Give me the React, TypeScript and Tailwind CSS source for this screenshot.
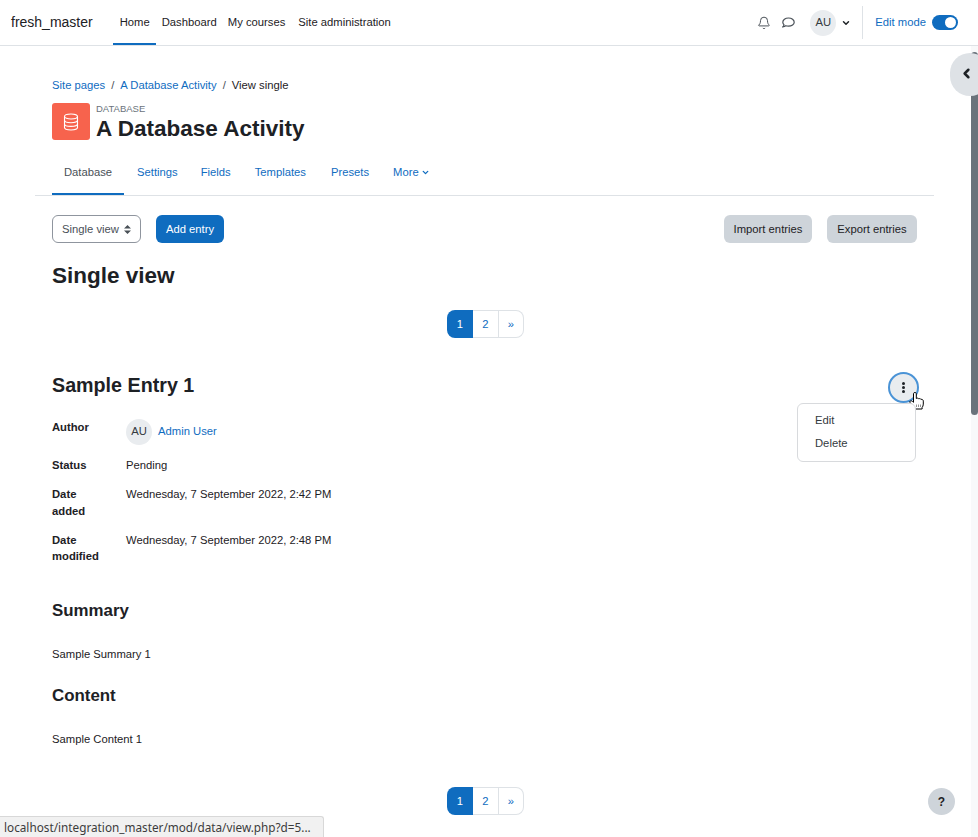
import { ChevronDown, ChevronLeft, Bell } from "lucide-react";

function Pagination() {
  return (
    <div className="flex justify-center pl-[2px]">
      <div className="flex h-7 text-[11.25px] text-[#0f6cbf]">
        <span className="flex w-[26px] items-center justify-center rounded-l-lg bg-[#0f6cbf] text-white">1</span>
        <span className="flex w-[26px] items-center justify-center border-y border-r border-[#dee2e6]">2</span>
        <span className="flex w-[25px] items-center justify-center rounded-r-lg border-y border-r border-[#dee2e6]">»</span>
      </div>
    </div>
  );
}

function Field({ label, children, className }: { label: React.ReactNode; children: React.ReactNode; className: string }) {
  return (
    <div className={`flex ${className}`}>
      <div className="w-[74px] font-bold leading-[16.875px]">{label}</div>
      <div className="leading-[16.875px]">{children}</div>
    </div>
  );
}

export default function App() {
  return (
    <div className="relative flex h-[837px] w-[978px] overflow-hidden bg-white font-['Liberation_Sans',Arial,sans-serif] text-[11.25px] text-[#1d2125]">
      <div className="min-w-0 flex-1">
        <nav className="flex h-[46px] w-[978px] items-center border-b border-[#dee2e6] pl-[11px] pr-5">
          <span className="text-[14px] text-[#1d2125]">fresh_master</span>
          <div className="ml-[20px] flex h-full">
            <a className="flex items-center border-b-2 border-[#0f6cbf] pl-[7px] pr-[6px] pt-px">Home</a>
            <a className="flex items-center pl-[6px] pr-[5px]">Dashboard</a>
            <a className="flex items-center pl-[6px] pr-[7px]">My courses</a>
            <a className="flex items-center px-[6px]">Site administration</a>
          </div>
          <div className="ml-auto flex h-full items-center">
            <Bell size={14} strokeWidth={1.7} className="text-[#495057]" />
            <svg className="ml-[11px]" width="13" height="11" viewBox="0 0 13 11" fill="none" stroke="#495057" strokeWidth="1.200">
              <path d="M6.500 1C3.200 1 .8 2.900.8 5.200c0 1 .5 1.900 1.200 2.600-.2.800-.7 1.500-1.200 2 1.200 0 2.200-.4 3-1 .8.300 1.700.4 2.700.4 3.300 0 5.700-1.900 5.700-4S9.800 1 6.500 1z" />
            </svg>
            <span className="ml-[15px] flex h-[26px] w-[26px] items-center justify-center rounded-full bg-[#e9ecef] text-[#343a40]">AU</span>
            <ChevronDown size={10} strokeWidth={3.5} className="ml-[5px] text-[#1d2125]" />
            <span className="ml-[11px] h-[33px] w-px bg-[#dee2e6]" />
            <span className="ml-3 text-[#0f6cbf]">Edit mode</span>
            <span className="ml-[6px] flex h-[15px] w-[26px] items-center justify-end rounded-full bg-[#0f6cbf] pr-[2px]">
              <span className="h-[11px] w-[11px] rounded-full bg-white" />
            </span>
          </div>
        </nav>

        <div className="ml-[52px]">
          <div className="pt-[32px] leading-[14px]">
            <a className="text-[#0f6cbf]">Site pages</a>
            <span className="mx-[6px] text-[#495057]">/</span>
            <a className="text-[#0f6cbf]">A Database Activity</a>
            <span className="mx-[6px] text-[#495057]">/</span>
            <span>View single</span>
          </div>
          <div className="mt-[11px] flex">
            <div className="flex h-[37px] w-[38px] items-center justify-center rounded-[3px] bg-[#f7634d]">
              <svg width="16" height="18" viewBox="0 0 16 18" fill="none" stroke="#fff" strokeWidth="1.100">
                <ellipse cx="8" cy="3.500" rx="6.500" ry="2.500" />
                <path d="M1.500 3.500v11c0 1.400 2.900 2.500 6.500 2.500s6.500-1.100 6.500-2.500v-11" />
                <path d="M1.500 7.200c0 1.400 2.900 2.500 6.500 2.500s6.500-1.100 6.500-2.500M1.500 10.900c0 1.400 2.900 2.500 6.500 2.500s6.500-1.100 6.500-2.500" />
              </svg>
            </div>
            <div className="ml-[6px]">
              <div className="text-[9.5px] leading-[12px] text-[#6a737b]">DATABASE</div>
              <h1 className="text-[22.5px] font-bold leading-[28px]">A Database Activity</h1>
            </div>
          </div>
        </div>

        <div className="ml-[35px] mt-[7px] flex h-[46px] w-[899px] border-b border-[#dee2e6] pl-[17px] text-[#0f6cbf]">
          <a className="flex w-[72px] items-center justify-center border-b-2 border-[#0f6cbf] pt-[2px] text-[#495057]">Database</a>
          <a className="flex items-center pl-[13px]">Settings</a>
          <a className="flex items-center pl-[23px]">Fields</a>
          <a className="flex items-center pl-[24px]">Templates</a>
          <a className="flex items-center pl-[25px]">Presets</a>
          <a className="flex items-center gap-[2px] pl-[24px]">More <ChevronDown size={9} strokeWidth={3.5} /></a>
        </div>

        <div className="ml-[52px] w-[865px]">
          <div className="mt-[19px] flex items-center">
            <div className="flex h-7 w-[89px] items-center gap-[5px] rounded-md border border-[#8f959e] pl-[9px] text-[#495057]">
              Single view
              <svg width="7" height="9" viewBox="0 0 7 9" fill="#495057">
                <path d="M3.500 0 7 3.600H0zM3.500 9 0 5.400h7z" />
              </svg>
            </div>
            <button className="ml-[15px] h-7 w-[68px] rounded-md bg-[#0f6cbf] text-white">Add entry</button>
            <button className="ml-auto h-7 w-[88px] rounded-md bg-[#ced4da] text-[#1d2125]">Import entries</button>
            <button className="ml-[15px] h-7 w-[90px] rounded-md bg-[#ced4da] text-[#1d2125]">Export entries</button>
          </div>
          <h2 className="mt-[18px] text-[22.5px] font-bold leading-[30px]">Single view</h2>
          <div className="mt-[19px]"><Pagination /></div>

          <h3 className="mt-[34px] text-[19.7px] font-bold leading-[26px]">Sample Entry 1</h3>

          <Field label="Author" className="mt-[21px] h-[38px]">
            <div className="flex items-center">
              <span className="flex h-[26px] w-[26px] items-center justify-center rounded-full bg-[#e9ecef] pb-px text-[#343a40]">AU</span>
              <a className="ml-[6px] pb-px text-[#0f6cbf]">Admin User</a>
            </div>
          </Field>
          <Field label="Status" className="h-[29px]">Pending</Field>
          <Field label={<>Date<br />added</>} className="h-[46px]">Wednesday, 7 September 2022, 2:42 PM</Field>
          <Field label={<>Date<br /><span className="block -mt-[0.5px]">modified</span></>} className="h-[46px]">Wednesday, 7 September 2022, 2:48 PM</Field>

          <h4 className="mt-[21px] text-[16.875px] font-bold leading-[24px]">Summary</h4>
          <p className="mt-[24px] leading-[14px]">Sample Summary 1</p>
          <h4 className="mt-[23px] text-[16.875px] font-bold leading-[24px]">Content</h4>
          <p className="mt-[24px] leading-[14px]">Sample Content 1</p>
          <div className="mt-[41px]"><Pagination /></div>
        </div>
      </div>

      {/* scrollbar */}
      <div className="relative mt-[46px] w-[7px] bg-[#f8f9fa]">
        <div className="absolute left-0 top-[6px] h-[363px] w-[7px] rounded-sm bg-[#6a737b]" />
      </div>

      {/* drawer toggle */}
      <div className="absolute left-[950px] top-[53px] flex h-[43px] w-[40px] items-center rounded-full bg-[#dee2e6] pb-[2px] pl-[9px]">
        <ChevronLeft size={15} strokeWidth={4} className="text-[#1d2125]" />
      </div>

      {/* action menu */}
      <div className="absolute left-[888px] top-[372px] flex h-[31px] w-[31px] flex-col items-center justify-center gap-[1.500px] rounded-full border-[2px] border-[#4a93d6] bg-[#e9ecef]">
        <span className="h-[2.500px] w-[3px] rounded-full bg-[#1d2125]" />
        <span className="h-[2.500px] w-[3px] rounded-full bg-[#1d2125]" />
        <span className="h-[2.500px] w-[3px] rounded-full bg-[#1d2125]" />
      </div>
      <svg className="absolute left-[909px] top-[392px]" width="17" height="18" viewBox="0 0 17 18">
        <path d="M4.500 1.500c0-1.300 2.800-1.300 2.800 0V6.500c.8-.6 2-.5 2.400.3.8-.4 1.900-.2 2.300.6 1-.3 2.300.3 2.300 1.700v3c0 1.600-.6 2.600-1.200 3.400V17H5.500v-1.500C4 14 2.500 12.500 1.200 10.800.5 9.800 1 8.800 2 8.800c.9 0 1.800.9 2.500 1.500z" fill="#fff" stroke="#000" strokeWidth="1" />
        <path d="M7.500 12.500v2.500M9.500 12.500v2.500M11.500 12.500v2.500" stroke="#666" strokeWidth=".7" />
      </svg>
      <div className="absolute left-[797px] top-[403px] h-[59px] w-[119px] rounded-md border border-[#d8dadd] bg-white pl-[17px] pt-[9px] leading-[14px] text-[#343a40]">
        <div>Edit</div>
        <div className="mt-[9px]">Delete</div>
      </div>

      {/* help */}
      <div className="absolute left-[928px] top-[788px] flex h-[27px] w-[27px] items-center justify-center rounded-full bg-[#ced4da] text-[12px] font-bold">?</div>

      {/* status bar */}
      <div className="absolute bottom-0 left-0 flex h-[21px] w-[324px] items-center rounded-tr-[3px] border-r border-t border-[#d8d8d8] bg-[#f1f1f1] pl-1 pt-px font-['Noto_Sans',sans-serif] text-[11.75px] text-[#3c3c3c]">
        localhost/integration_master/mod/data/view.php?d=5...
      </div>
    </div>
  );
}
